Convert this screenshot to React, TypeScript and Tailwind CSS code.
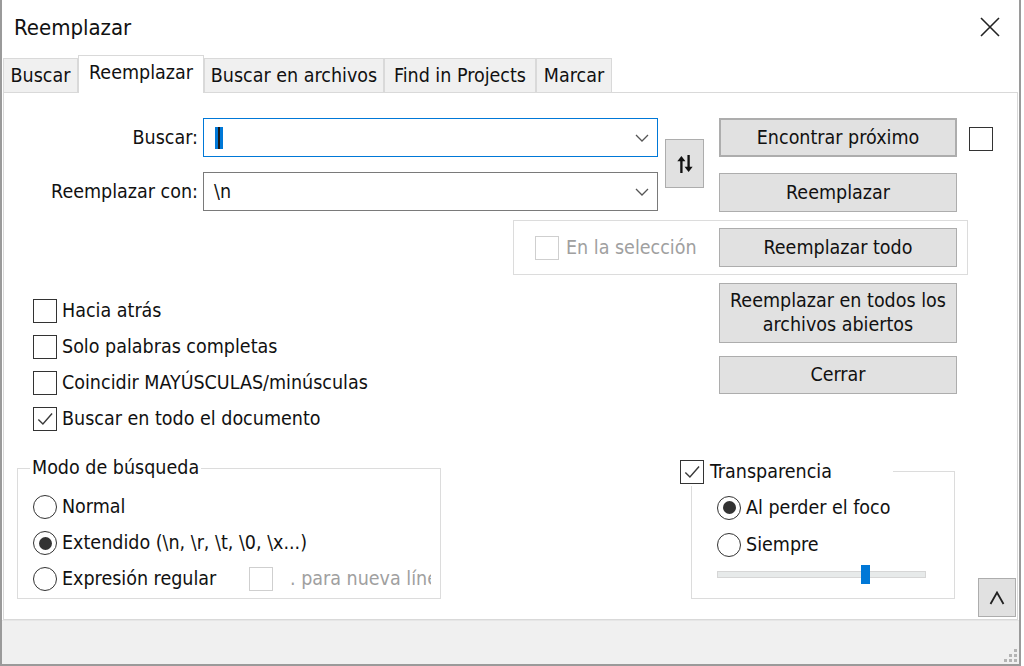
import React from 'react';

function CheckMark() {
  return (
    <svg viewBox="0 0 24 24" className="h-[20px] w-[20px]">
      <polyline points="4,12.5 9.5,18 20.5,5.5" fill="none" stroke="#3a3a3a" strokeWidth="1.7" />
    </svg>
  );
}

function Box({ checked = false, disabled = false }: { checked?: boolean; disabled?: boolean }) {
  return (
    <span
      className={
        disabled
          ? 'flex h-[24px] w-[24px] shrink-0 items-center justify-center border-[1.5px] border-[#cfcfcf] bg-white'
          : 'flex h-[24px] w-[24px] shrink-0 items-center justify-center border-[1.5px] border-[#333333] bg-white'
      }
    >
      {checked && <CheckMark />}
    </span>
  );
}

function Radio({ checked = false }: { checked?: boolean }) {
  return (
    <span className="flex h-[24px] w-[24px] shrink-0 items-center justify-center rounded-full border-[1.5px] border-[#333333] bg-white">
      {checked && <span className="h-[13px] w-[13px] rounded-full bg-[#333333]" />}
    </span>
  );
}

function Chevron() {
  return (
    <svg viewBox="0 0 14 8" className="h-[8px] w-[14px]">
      <polyline points="1,1 7,7 13,1" fill="none" stroke="#555" strokeWidth="1.3" />
    </svg>
  );
}

function Btn({ children, className = '' }: { children: React.ReactNode; className?: string }) {
  return (
    <div
      className={
        'flex w-[238px] items-center justify-center border border-[#adadad] bg-[#e1e1e1] text-center leading-[24px] ' +
        className
      }
    >
      {children}
    </div>
  );
}

const tabs = [
  { label: 'Buscar', w: 'w-[75px]' },
  { label: 'Reemplazar', w: 'w-[126px]', active: true },
  { label: 'Buscar en archivos', w: 'w-[180px]' },
  { label: 'Find in Projects', w: 'w-[152px]' },
  { label: 'Marcar', w: 'w-[76px]' },
];

export default function App() {
  return (
    <div className="h-[666px] w-[1024px] overflow-hidden bg-white font-['DejaVu_Sans_Condensed','DejaVu_Sans',sans-serif] text-[19.5px] text-[#111]">
      <div className="flex h-[666px] w-[1021px] flex-col border-r-2 border-b-2 border-l-2 border-[#9a9a9a] bg-white">
        {/* barra de título */}
        <div className="flex h-[55px] shrink-0 items-start justify-between pr-[19px] pl-[12px]">
          <span className="mt-[14px] text-[22px] leading-[28px]">Reemplazar</span>
          <svg viewBox="0 0 20 20" className="mt-[17px] h-[20px] w-[20px]">
            <path d="M1 1L19 19M19 1L1 19" stroke="#222" strokeWidth="1.6" />
          </svg>
        </div>

        {/* pestañas */}
        <div className="relative z-10 flex h-[37px] shrink-0 items-end px-[1px]">
          {tabs.map((t) =>
            t.active ? (
              <div
                key={t.label}
                className={'-mb-px flex h-[38px] items-center justify-center border border-b-0 border-[#d9d9d9] bg-white pb-[4px] ' + t.w}
              >
                {t.label}
              </div>
            ) : (
              <div
                key={t.label}
                className={'flex h-[34px] items-center justify-center border border-b-0 border-[#d9d9d9] bg-[#f0f0f0] ' + t.w}
              >
                {t.label}
              </div>
            ),
          )}
        </div>

        {/* panel */}
        <div className="mx-[1px] flex h-[528px] shrink-0 flex-col border border-[#d9d9d9] bg-white">
          {/* buscar / reemplazar */}
          <div className="flex items-start pt-[25px]">
            <div className="flex flex-col gap-[15px]">
              <div className="flex items-center">
                <span className="w-[199px] pr-[5px] text-right">Buscar:</span>
                <div className="flex h-[39px] w-[455px] items-center justify-between border border-[#0078d7] pr-[8px] pl-[11px]">
                  <span className="flex h-[22px] w-[8px] justify-center bg-[#0078d7]">
                    <span className="h-full w-[2px] bg-[#1a1a1a]" />
                  </span>
                  <Chevron />
                </div>
              </div>
              <div className="flex items-center">
                <span className="w-[199px] pr-[5px] text-right">Reemplazar con:</span>
                <div className="flex h-[39px] w-[455px] items-center justify-between border border-[#7a7a7a] pr-[8px] pl-[10px]">
                  <span>\n</span>
                  <Chevron />
                </div>
              </div>
            </div>

            <div className="mt-[21px] ml-[7px] flex h-[49px] w-[39px] items-center justify-center border border-[#adadad] bg-[#e1e1e1]">
              <svg viewBox="0 0 20 22" className="h-[22px] w-[18px]">
                <path d="M6 21V6" stroke="#111" strokeWidth="2.6" />
                <path d="M1.5 8L6 2L10.5 8Z" fill="#111" />
                <path d="M14 1V16" stroke="#111" strokeWidth="2.6" />
                <path d="M9.5 14L14 20L18.5 14Z" fill="#111" />
              </svg>
            </div>

            <div className="ml-[15px] flex flex-col gap-[16px]">
              <Btn className="h-[39px] border-2 border-[#0078d7]">Encontrar próximo</Btn>
              <Btn className="h-[39px]">Reemplazar</Btn>
            </div>

            <div className="mt-[9px] ml-[12px]">
              <Box />
            </div>
          </div>

          {/* en la selección */}
          <div className="mt-[8px] ml-[509px] flex h-[55px] w-[455px] items-center border border-[#dcdcdc] pl-[21px]">
            <Box disabled />
            <span className="ml-[7px] text-[#a0a0a0]">En la selección</span>
            <Btn className="mr-[10px] ml-auto h-[39px]">Reemplazar todo</Btn>
          </div>

          {/* opciones + botones */}
          <div className="mt-[8px] flex items-start">
            <div className="flex w-[715px] flex-col pt-[10px] pl-[29px]">
              {[
                ['Hacia atrás', false],
                ['Solo palabras completas', false],
                ['Coincidir MAYÚSCULAS/minúsculas', false],
                ['Buscar en todo el documento', true],
              ].map(([label, checked]) => (
                <div key={label as string} className="flex h-[36px] items-center">
                  <Box checked={checked as boolean} />
                  <span className="ml-[5px]">{label as string}</span>
                </div>
              ))}
            </div>
            <div className="flex flex-col gap-[13px]">
              <Btn className="h-[60px]">
                Reemplazar en todos los
                <br />
                archivos abiertos
              </Btn>
              <Btn className="h-[38px]">Cerrar</Btn>
            </div>
          </div>

          {/* grupos inferiores */}
          <div className="mt-[20px] flex items-start">
            <fieldset className="ml-[13px] h-[142px] w-[424px] border border-[#dcdcdc]">
              <legend className="ml-[12px] px-[2px] leading-[22px]">Modo de búsqueda</legend>
              <div className="flex flex-col pt-[10px] pl-[15px]">
                <div className="flex h-[36px] items-center">
                  <Radio />
                  <span className="ml-[5px]">Normal</span>
                </div>
                <div className="flex h-[36px] items-center">
                  <Radio checked />
                  <span className="ml-[5px]">Extendido (\n, \r, \t, \0, \x...)</span>
                </div>
                <div className="flex h-[36px] items-center">
                  <div className="flex w-[216px] items-center">
                    <Radio />
                    <span className="ml-[5px]">Expresión regular</span>
                  </div>
                  <Box disabled />
                  <span className="ml-[17px] w-[141px] overflow-hidden whitespace-nowrap text-[#a0a0a0]">
                    . para nueva línea
                  </span>
                </div>
              </div>
            </fieldset>

            <fieldset className="ml-[250px] h-[142px] w-[264px] border border-[#dcdcdc]">
              <legend className="-ml-[12px] flex w-[213px] items-center bg-white">
                <Box checked />
                <span className="ml-[6px]">Transparencia</span>
              </legend>
              <div className="flex flex-col pt-[3px] pl-[25px]">
                <div className="flex h-[37px] items-center">
                  <Radio checked />
                  <span className="ml-[5px]">Al perder el foco</span>
                </div>
                <div className="flex h-[37px] items-center">
                  <Radio />
                  <span className="ml-[5px]">Siempre</span>
                </div>
                <div className="relative mt-[2px] flex h-[19px] w-[209px] items-center">
                  <div className="h-[7px] w-full border border-[#d6d6d6] bg-[#e7eaea]" />
                  <div className="absolute top-0 left-[144px] h-[19px] w-[9px] bg-[#0078d7]" />
                </div>
              </div>
            </fieldset>

            <div className="mt-[121px] ml-[23px] flex h-[39px] w-[38px] items-center justify-center border border-[#adadad] bg-[#e1e1e1]">
              <svg viewBox="0 0 16 14" className="h-[14px] w-[16px]">
                <polyline points="1.5,13 8,1.5 14.5,13" fill="none" stroke="#222" strokeWidth="1.8" />
              </svg>
            </div>
          </div>
        </div>

        {/* pie con agarre */}
        <div className="flex flex-1 items-end justify-end border-t border-[#e6e6e6] bg-[#f0f0f0] pr-[2px] pb-[2px]">
          <svg viewBox="0 0 15 15" className="h-[15px] w-[15px]">
            <rect x="12" y="2" width="3" height="3" fill="#b4b4b4" />
            <rect x="7" y="7" width="3" height="3" fill="#b4b4b4" />
            <rect x="12" y="7" width="3" height="3" fill="#b4b4b4" />
            <rect x="2" y="12" width="3" height="3" fill="#b4b4b4" />
            <rect x="7" y="12" width="3" height="3" fill="#b4b4b4" />
            <rect x="12" y="12" width="3" height="3" fill="#b4b4b4" />
          </svg>
        </div>
      </div>
    </div>
  );
}
